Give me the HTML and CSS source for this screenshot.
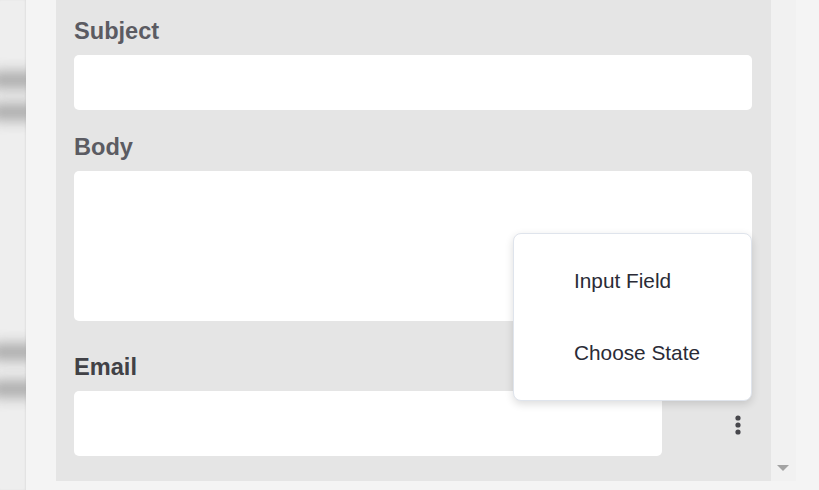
FILE: index.html
```html
<!DOCTYPE html>
<html>
<head>
<meta charset="utf-8">
<link rel="stylesheet" href="styles.css">
</head>
<body>
<div class="screen">
  <div class="backdrop">
    <div class="smudge s1"></div>
    <div class="smudge s2"></div>
    <div class="smudge s3"></div>
    <div class="smudge s4"></div>
  </div>
  <div class="modal">
    <div class="modal-body">
      <div class="panel">
        <div class="field">
          <label class="label">Subject</label>
          <div class="input input-subject"></div>
        </div>
        <div class="field">
          <label class="label">Body</label>
          <div class="input input-body"></div>
        </div>
        <div class="field field-email">
          <label class="label label-dark">Email</label>
          <div class="email-row">
            <div class="input input-email"></div>
            <button class="kebab" aria-label="More">
              <svg width="6" height="20" viewBox="0 0 6 20"><circle cx="3" cy="3" r="2.6" fill="#47474c"/><circle cx="3" cy="10" r="2.6" fill="#47474c"/><circle cx="3" cy="17" r="2.6" fill="#47474c"/></svg>
            </button>
          </div>
        </div>
        <div class="menu">
          <div class="menu-item">Input Field</div>
          <div class="menu-item">Choose State</div>
        </div>
      </div>
      <div class="scrolltrack">
        <div class="arrow-down"></div>
      </div>
    </div>
  </div>
</div>
</body>
</html>
```
FILE: styles.css
```css
html, body {
  margin: 0;
  padding: 0;
}
body {
  background: #f4f4f4;
  font-family: "Liberation Sans", Arial, sans-serif;
}
.screen {
  width: 819px;
  height: 490px;
  display: flex;
  overflow: hidden;
}
.backdrop {
  width: 26px;
  flex: none;
  background: #eeeeee;
  position: relative;
  overflow: hidden;
  box-shadow: inset -1px 0 2px rgba(0,0,0,0.06);
}
.smudge {
  position: absolute;
  left: -10px;
  width: 50px;
  height: 16px;
  background: #a6a6a6;
  filter: blur(7px);
  border-radius: 4px;
}
.s1 { top: 72px; }
.s2 { top: 104px; }
.s3 { top: 344px; }
.s4 { top: 381px; }
.modal {
  flex: 1;
  background: #f4f4f4;
  padding-left: 30px;
  padding-bottom: 9px;
  display: flex;
  flex-direction: column;
}
.modal-body {
  flex: 1;
  display: flex;
}
.panel {
  width: 715px;
  flex: none;
  background: #e5e5e5;
  box-sizing: border-box;
  padding: 18px 19px 0 18px;
  position: relative;
}
.scrolltrack {
  width: 25px;
  flex: none;
  background: #f1f1f1;
  position: relative;
}
.arrow-down {
  position: absolute;
  left: 6px;
  bottom: 10px;
  width: 0;
  height: 0;
  border-left: 6px solid transparent;
  border-right: 6px solid transparent;
  border-top: 6px solid #a3a3a3;
}
.label {
  display: block;
  font-size: 23.6px;
  line-height: 27px;
  font-weight: bold;
  color: #5b5b62;
  margin-bottom: 10px;
}
.label-dark {
  color: #414146;
}
.input {
  background: #ffffff;
  border-radius: 5px;
}
.input-subject {
  height: 55px;
  margin-bottom: 24px;
}
.input-body {
  height: 150px;
  margin-bottom: 33px;
}
.email-row {
  display: flex;
  align-items: center;
}
.input-email {
  width: 588px;
  height: 65px;
}
.kebab {
  margin-left: 62px;
  width: 28px;
  height: 28px;
  border: 0;
  background: transparent;
  padding: 0;
  display: flex;
  align-items: center;
  justify-content: center;
  margin-top: 2px;
}
.menu {
  position: absolute;
  left: 457px;
  top: 233px;
  width: 239px;
  box-sizing: border-box;
  background: #ffffff;
  border: 1px solid #dfe4ec;
  border-radius: 8px;
  box-shadow: 0 3px 8px rgba(0,0,0,0.14);
  padding: 11px 0;
}
.menu-item {
  height: 72px;
  line-height: 72px;
  padding-left: 60px;
  font-size: 20.8px;
  color: #2a2b36;
}
```
